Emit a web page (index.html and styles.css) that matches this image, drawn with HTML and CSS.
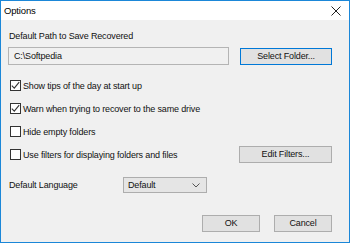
FILE: index.html
```html
<!DOCTYPE html>
<html lang="en">
<head>
    <meta charset="UTF-8">
    <title>Options</title>
    <link rel="stylesheet" href="styles.css">
</head>
<body>
    <div class="window">
        <!-- title bar -->
        <div class="titlebar">
            <span class="title">Options</span>
            <svg class="close" width="10" height="10" viewBox="0 0 10 10">
                <path d="M0.5 0.5 L9.5 9.5 M9.5 0.5 L0.5 9.5" stroke="#222" stroke-width="1" fill="none"/>
            </svg>
        </div>

        <div class="content">
            <!-- recovery path -->
            <div class="label">Default Path to Save Recovered</div>
            <div class="path-row">
                <div class="path-input">C:\Softpedia</div>
                <button class="btn btn-default">Select Folder...</button>
            </div>

            <!-- options -->
            <div class="checks">
                <div class="check-row">
                    <span class="box checked"><svg width="9" height="9" viewBox="0 0 9 9"><path d="M0.8 4.6 L3.3 7.2 L8.2 1.2" stroke="#333" stroke-width="1.1" fill="none"/></svg></span>
                    <span>Show tips of the day at start up</span>
                </div>
                <div class="check-row">
                    <span class="box checked"><svg width="9" height="9" viewBox="0 0 9 9"><path d="M0.8 4.6 L3.3 7.2 L8.2 1.2" stroke="#333" stroke-width="1.1" fill="none"/></svg></span>
                    <span>Warn when trying to recover to the same drive</span>
                </div>
                <div class="check-row">
                    <span class="box"></span>
                    <span>Hide empty folders</span>
                </div>
                <div class="check-row">
                    <span class="box"></span>
                    <span>Use filters for displaying folders and files</span>
                    <button class="btn btn-filters">Edit Filters...</button>
                </div>
            </div>

            <!-- language -->
            <div class="lang-row">
                <span class="lang-label">Default Language</span>
                <div class="select">
                    <span>Default</span>
                    <svg width="8" height="5" viewBox="0 0 8 5"><path d="M0.5 0.5 L4 4 L7.5 0.5" stroke="#555" stroke-width="1" fill="none"/></svg>
                </div>
            </div>

            <!-- dialog buttons -->
            <div class="footer">
                <button class="btn btn-ok">OK</button>
                <button class="btn btn-ok">Cancel</button>
            </div>
        </div>
    </div>
</body>
</html>
```

FILE: styles.css
```css
body {
    margin: 0;
    padding: 0;
    font-family: "Liberation Sans", Arial, sans-serif;
    font-size: 9px;
    letter-spacing: -0.15px;
    color: #111;
}

.window {
    width: 350px;
    height: 243px;
    box-sizing: border-box;
    border: 1px solid #1b87d8;
    background-color: #f0f0f0;
    display: flex;
    flex-direction: column;
}

.titlebar {
    height: 19px;
    background-color: #fff;
    display: flex;
    align-items: center;
    justify-content: space-between;
    padding: 0 8px 0 3px;
    flex-shrink: 0;
}

.title {
    font-size: 9.5px;
    color: #000;
}

.close {
    display: block;
}

.content {
    flex: 1;
    padding: 0 17px 0 7px;
    display: flex;
    flex-direction: column;
}

.label {
    margin: 10px 0 0 1px;
    height: 12px;
    line-height: 12px;
}

.path-row {
    display: flex;
    align-items: center;
    margin-top: 5px;
}

.path-input {
    width: 217px;
    height: 16px;
    line-height: 16px;
    border: 1px solid #b4b4b4;
    background-color: #f0f0f0;
    padding-left: 5px;
    box-sizing: content-box;
    margin-right: 11px;
}

.btn {
    font-family: "Liberation Sans", Arial, sans-serif;
    font-size: 9px;
    letter-spacing: -0.15px;
    color: #111;
    background-color: #e1e1e1;
    border: 1px solid #adadad;
    padding: 0;
    height: 17px;
    line-height: 15px;
    box-sizing: border-box;
}

.btn-default {
    width: 93px;
    border-color: #0078d7;
}

/* checkbox rows */
.checks {
    margin-top: 14px;
    display: flex;
    flex-direction: column;
    gap: 10px;
}

.check-row {
    display: flex;
    align-items: center;
    height: 13px;
    padding-left: 2px;
}

.box {
    width: 9px;
    height: 9px;
    border: 1px solid #333;
    background-color: #fff;
    margin-right: 2px;
    display: flex;
    align-items: center;
    justify-content: center;
}

.btn-filters {
    width: 93px;
    margin-left: auto;
}

/* language picker */
.lang-row {
    display: flex;
    align-items: center;
    margin-top: 16px;
    padding-left: 1px;
}

.lang-label {
    width: 114px;
}

.select {
    width: 84px;
    height: 16px;
    border: 1px solid #adadad;
    background-color: #e5e5e5;
    box-sizing: border-box;
    display: flex;
    align-items: center;
    justify-content: space-between;
    padding: 0 6px 0 4px;
}

.footer {
    display: flex;
    justify-content: flex-end;
    gap: 14px;
    margin-top: 22px;
}

.btn-ok {
    width: 58px;
}
```
